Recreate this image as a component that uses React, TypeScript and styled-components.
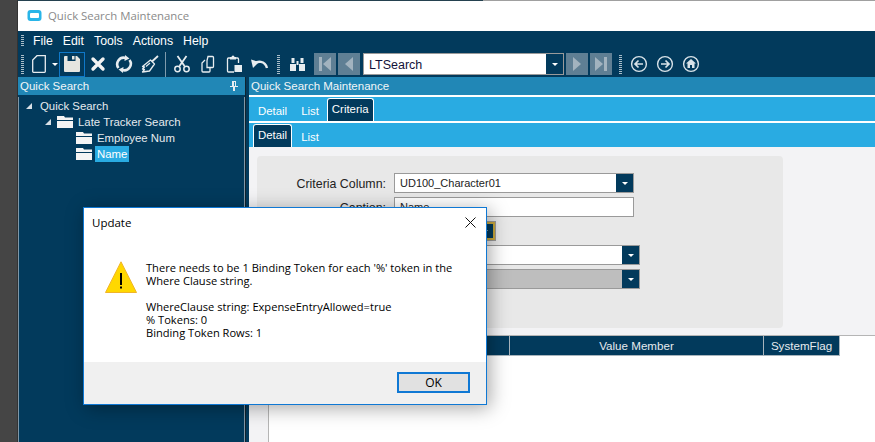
import * as React from "react";
import styled, { createGlobalStyle } from "styled-components";

const NAVY = "#023a5c";
const SKY = "#29abe2";
const HEADER = "#2187b6";
const ICON = "#e8edf0";
const DISC = "#d8e2e8";

const GlobalStyle = createGlobalStyle`
    html, body {
        margin: 0;
        padding: 0;
        width: 875px;
        height: 442px;
        overflow: hidden;
        background: #454545;
        font-family: "Liberation Sans", Arial, sans-serif;
    }
`;

const Page = styled.div`
    position: relative;
    width: 875px;
    height: 442px;
    padding-left: 18px;
    box-sizing: border-box;
    overflow: hidden;
    background: linear-gradient(to right, #454545 17px, #333 17px);
`;

const TopEdge = styled.div`
    height: 1px;
    background: linear-gradient(to right, #24414f 465px, #a0a0a0 465px);
`;

const AppWindow = styled.div`
    display: flex;
    flex-direction: column;
    width: 857px;
    height: 441px;
    background: #fff;
`;

const TitleBar = styled.div`
    display: flex;
    align-items: center;
    gap: 6px;
    height: 30px;
    flex: none;
    box-sizing: border-box;
    padding: 0 0 2px 9px;
    color: #8a8a8a;
    font: 11.4px "Open Sans", sans-serif;
`;

const Shell = styled.div`
    flex: none;
    height: 46px;
    background: ${NAVY};
    color: #fff;
`;

const MenuBar = styled.div`
    display: flex;
    align-items: center;
    height: 20px;
    padding: 0 0 0 3px;
    font-size: 12.3px;
    gap: 10px;
    span:first-of-type { margin-left: -1px; }
`;

const Grip = styled.i<{ $h?: number; $after?: number }>`
    display: block;
    flex: none;
    width: 3px;
    height: ${p => p.$h || 19}px;
    margin-right: ${p => p.$after || 0}px;
    background: repeating-linear-gradient(to bottom, #a9bdc9 0 1px, transparent 1px 2px);
`;

const ToolBar = styled.div`
    display: flex;
    align-items: center;
    height: 26px;
    padding-left: 3px;
`;

const ToolButton = styled.div<{ $w?: number; $active?: boolean; $after?: number }>`
    display: flex;
    align-items: center;
    justify-content: center;
    flex: none;
    width: ${p => p.$w || 26}px;
    height: 25px;
    margin-right: ${p => p.$after || 0}px;
    box-sizing: border-box;
    border: 1px solid ${p => (p.$active ? "#0f78c8" : "transparent")};
`;

const DropArrow = styled.svg`
    flex: none;
    margin-right: 1px;
`;

const Separator = styled.i`
    display: block;
    flex: none;
    width: 1px;
    height: 25px;
    margin: 0 3px 0 2px;
    background: #7f9bad;
`;

const NavButton = styled.div<{ $after?: number }>`
    display: flex;
    align-items: center;
    justify-content: center;
    flex: none;
    width: 22px;
    height: 22px;
    margin-right: ${p => p.$after ?? 2}px;
    background: #5f7f94;
`;

const NavCombo = styled.div`
    display: flex;
    flex: none;
    align-items: stretch;
    justify-content: space-between;
    width: 201px;
    height: 22px;
    margin-right: 2px;
    box-sizing: border-box;
    border: 1px solid #9a9a9a;
    background: #fff;
    color: #12123a;
    font-size: 12.5px;
    line-height: 22px;
    padding-left: 5px;
`;

const CaretBox = styled.div`
    display: flex;
    align-items: center;
    justify-content: center;
    flex: none;
    width: 17px;
    background: ${NAVY};
    &::after {
        content: "";
        border-left: 3px solid transparent;
        border-right: 3px solid transparent;
        border-top: 3px solid #fff;
    }
`;

const Body = styled.div`
    flex: 1;
    min-height: 0;
    display: flex;
    background: ${NAVY};
`;

const LeftDock = styled.div`
    display: flex;
    flex-direction: column;
    flex: none;
    width: 228px;
    box-sizing: border-box;
    border-right: 1px solid #10232f;
`;

const RightDock = styled.div`
    display: flex;
    flex-direction: column;
    flex: 1;
    min-width: 0;
    margin-left: 3px;
    background: #fff;
`;

const DockHeader = styled.div`
    display: flex;
    align-items: center;
    justify-content: space-between;
    height: 18px;
    flex: none;
    padding: 0 7px 0 2px;
    margin-bottom: 2px;
    background: ${HEADER};
    color: #f2f6f8;
    font-size: 11.5px;
`;

const Tree = styled.div`
    flex: 1;
    box-sizing: border-box;
    padding: 1px 0 0 4px;
    border-left: 1px solid #7f97a7;
    border-right: 1px solid #7f97a7;
    color: #e6ebef;
    font-size: 11.4px;
`;

const TreeRow = styled.div<{ $indent: number }>`
    display: flex;
    align-items: center;
    height: 16px;
    padding-left: ${p => p.$indent}px;
`;

const Twisty = styled.i`
    display: block;
    width: 0;
    height: 0;
    flex: none;
    margin-right: 6px;
    border-left: 6px solid transparent;
    border-bottom: 6px solid #d8e0e6;
`;

const TreeLabel = styled.span<{ $gap?: number; $selected?: boolean }>`
    margin-left: ${p => p.$gap || 0}px;
    padding: 0 2px;
    line-height: 16px;
    background: ${p => (p.$selected ? SKY : "transparent")};
    color: ${p => (p.$selected ? "#fff" : "inherit")};
`;

const FolderShape = styled.svg`
    flex: none;
`;

const TabRow = styled.div<{ $pad: number; $gap: number }>`
    display: flex;
    align-items: flex-end;
    flex: none;
    height: 24px;
    margin-bottom: 2px;
    padding-left: ${p => p.$pad}px;
    background: ${SKY};
    gap: ${p => p.$gap}px;
`;

const Tab = styled.div<{ $active?: boolean }>`
    box-sizing: border-box;
    height: ${p => (p.$active ? 23 : 22)}px;
    padding: 0 ${p => (p.$active ? 4 : 6)}px;
    color: #fff;
    font-size: 11.4px;
    line-height: ${p => (p.$active ? 21 : 24)}px;
    background: ${p => (p.$active ? NAVY : "transparent")};
    border: ${p => (p.$active ? "1px solid #fff" : "none")};
    border-bottom: none;
    border-radius: 3px 3px 0 0;
`;

const DetailArea = styled.div`
    flex: none;
    height: 189px;
    box-sizing: border-box;
    padding: 9px 0 0 8px;
    margin-top: -2px;
    background: #f3f3f5;
    border-bottom: 1px solid #b5b5b5;
`;

const FormPanel = styled.div`
    box-sizing: border-box;
    width: 526px;
    height: 172px;
    padding-top: 17px;
    background: #e8e8e8;
    border-radius: 4px;
    display: flex;
    flex-direction: column;
    gap: 4px;
`;

const FormRow = styled.div`
    display: flex;
    align-items: center;
    height: 20px;
`;

const FormLabel = styled.label`
    flex: none;
    width: 129px;
    margin: 2px 8px 0 0;
    text-align: right;
    color: #222;
    font-size: 12.4px;
`;

const Field = styled.div<{ $w: number; $bg?: string; $focus?: boolean }>`
    display: flex;
    justify-content: space-between;
    box-sizing: border-box;
    width: ${p => (p.$focus ? p.$w - 2 : p.$w)}px;
    height: ${p => (p.$focus ? 18 : 20)}px;
    margin-left: ${p => (p.$focus ? 1 : 0)}px;
    border: ${p => (p.$focus ? "2px solid #c9a83c" : "1px solid #9a9a9a")};
    box-shadow: ${p => (p.$focus ? "0 0 0 1px #9a9a9a" : "none")};
    background: ${p => p.$bg || "#fff"};
    padding-left: 5px;
    color: #222;
    font-size: 11px;
    line-height: 18px;
`;

const GridArea = styled.div`
    flex: 1;
    padding-left: 19px;
    background: #f3f3f5;
`;

const Grid = styled.div`
    height: 100%;
    background: #fff;
    border-left: 1px solid #b5b5b5;
`;

const GridHead = styled.div`
    display: flex;
    height: 20px;
`;

const GridCol = styled.div<{ $w: number }>`
    flex: none;
    box-sizing: border-box;
    width: ${p => p.$w}px;
    height: 20px;
    background: ${NAVY};
    border-right: 1px solid #a8b4bc;
    border-bottom: 1px solid #a8b4bc;
    color: #e6ebef;
    font-size: 11.6px;
    line-height: 20px;
    text-align: center;
`;

const Dialog = styled.div`
    position: absolute;
    left: 83px;
    top: 207px;
    width: 404px;
    height: 198px;
    box-sizing: border-box;
    display: flex;
    flex-direction: column;
    background: #fff;
    border: 1px solid #0f78d4;
    box-shadow: 3px 3px 18px rgba(0, 0, 0, 0.35);
    color: #000;
    font: 12px "Open Sans", "Noto Sans", sans-serif;
`;

const DialogTitle = styled.div`
    display: flex;
    align-items: center;
    justify-content: space-between;
    flex: none;
    height: 29px;
    padding: 0 10px 0 8px;
    font-size: 11.5px;
`;

const DialogBody = styled.div`
    flex: 1;
    display: flex;
    padding: 24px 0 0 21px;
    gap: 9px;
`;

const WarningShape = styled.svg`
    flex: none;
`;

const Message = styled.div`
    font-size: 11.1px;
    line-height: 13px;
    p { margin: 0 0 13px; }
`;

const DialogFooter = styled.div`
    display: flex;
    justify-content: flex-end;
    flex: none;
    height: 42px;
    padding: 10px 16px 0 0;
    box-sizing: border-box;
    background: #f0f0f0;
`;

const OkButton = styled.div`
    box-sizing: border-box;
    width: 73px;
    height: 21px;
    border: 2px solid #0f78d4;
    background: #e1e1e1;
    text-align: center;
    font-size: 12px;
    line-height: 17px;
`;

const Ico = ({ children, w = 18, h = 18 }: { children: React.ReactNode; w?: number; h?: number }) => (
    <svg width={w} height={h} viewBox={`0 0 ${w} ${h}`} fill="none">{children}</svg>
);

const FolderIcon = () => (
    <FolderShape width="16" height="12" viewBox="0 0 16 12">
        <path d="M0 0h7l1 1.5h8V4H0zM0 5h16v7H0z" fill="#f4f4f4" />
    </FolderShape>
);

const PinIcon = () => (
    <svg width="8" height="10" viewBox="0 0 8 10">
        <path d="M2 0h4v5h2v1H5v4H3V6H0V5h2z" fill="#e8eef2" />
        <path d="M4 1h1v4H4z" fill={HEADER} />
    </svg>
);

const WarningIcon = () => (
    <WarningShape width="32" height="32" viewBox="0 0 32 32">
        <path d="M16 .8 31.5 31.5H.5z" fill="#ffd800" stroke="#f0b429" strokeWidth="1" />
        <path d="M15 12h2v12h-2zM15 25.5h2v2h-2z" fill="#000" />
    </WarningShape>
);

const CircleGlyph = ({ children }: { children: React.ReactNode }) => (
    <ToolButton>
        <Ico>
            <circle cx="9" cy="9" r="7.4" stroke={DISC} strokeWidth="1.4" />
            {children}
        </Ico>
    </ToolButton>
);

export default function App() {
    return (
        <Page>
            <GlobalStyle />
            <TopEdge />
            <AppWindow>
                <TitleBar>
                    <svg width="15" height="11" viewBox="0 0 15 11">
                        <rect x="0.5" y="0" width="14" height="11" rx="3" fill="#29b5e8" />
                        <rect x="3" y="3" width="9" height="5" rx="1" fill="#fff" />
                    </svg>
                    Quick Search Maintenance
                </TitleBar>
                <Shell>
                    <MenuBar>
                        <Grip $h={12} />
                        <span>File</span>
                        <span>Edit</span>
                        <span>Tools</span>
                        <span>Actions</span>
                        <span>Help</span>
                    </MenuBar>
                    <ToolBar>
                        <Grip />
                        <ToolButton $w={28}>
                            <Ico w={16} h={18}>
                                <path d="M7 .7h8.3v15.8a.8.8 0 0 1-.8.8H3.5a.8.8 0 0 1-.8-.8V5z" stroke={ICON} strokeWidth="1.3" />
                            </Ico>
                        </ToolButton>
                        <DropArrow width="6" height="3" viewBox="0 0 6 3"><path d="M0 0h6L3 3z" fill="#fff" /></DropArrow>
                        <ToolButton $active>
                            <Ico>
                                <path d="M2 1h2.5v5h8V1H14l3 3v12a1 1 0 0 1-1 1H2a1 1 0 0 1-1-1V2a1 1 0 0 1 1-1z" fill="#e6e6e0" />
                                <path d="M9 1h2.5v3.5H9z" fill="#e6e6e0" />
                            </Ico>
                        </ToolButton>
                        <ToolButton>
                            <Ico w={16} h={16}>
                                <path d="M3 3l10 10M13 3 3 13" stroke="#f2f2f2" strokeWidth="3.4" strokeLinecap="round" />
                            </Ico>
                        </ToolButton>
                        <ToolButton>
                            <Ico>
                                <path d="M3.5 13A6.5 6.5 0 0 1 10.5 2.9M14.5 5A6.5 6.5 0 0 1 7.5 15.1" stroke={ICON} strokeWidth="2.6" />
                                <path d="M10 0l4.5 3.5L9.5 6zM8 18l-4.500-3.500L8.500 12z" fill={ICON} />
                            </Ico>
                        </ToolButton>
                        <ToolButton>
                            <Ico>
                                <path d="M17 1l-6 5.5" stroke={ICON} strokeWidth="1.8" />
                                <path d="M9.500 5 13.500 9 8.500 16 1.500 17 3.500 14.500 1.500 14 3.500 12 1.500 11.500z" stroke={ICON} strokeWidth="1.3" strokeLinejoin="round" />
                                <path d="M5 11.5 9 8" stroke={ICON} strokeWidth="1.1" />
                            </Ico>
                        </ToolButton>
                        <Separator />
                        <ToolButton>
                            <Ico>
                                <path d="M4.500 1l7 10M13.500 1l-7 10" stroke={ICON} strokeWidth="1.8" />
                                <circle cx="4.5" cy="14" r="2.7" stroke={ICON} strokeWidth="1.5" />
                                <circle cx="13.5" cy="14" r="2.7" stroke={ICON} strokeWidth="1.5" />
                            </Ico>
                        </ToolButton>
                        <ToolButton>
                            <Ico w={16} h={18}>
                                <path d="M8 1.5h4.500a1 1 0 0 1 1 1v9a1 1 0 0 1-1 1H7V5.500z" stroke={ICON} strokeWidth="1.3" />
                                <path d="M5 5 2 8v8a1 1 0 0 0 1 1h6a1 1 0 0 0 1-1v-3" stroke={ICON} strokeWidth="1.3" />
                            </Ico>
                        </ToolButton>
                        <ToolButton>
                            <Ico w={16} h={18}>
                                <path d="M4 3H2.500a1 1 0 0 0-1 1v12a1 1 0 0 0 1 1H8M10 3h1.500a1 1 0 0 1 1 1v4" stroke={ICON} strokeWidth="1.3" />
                                <path d="M4 2h1.500a1.500 1.500 0 0 1 3 0H10v2.500H4zM8.500 10H16v7H8.500z" fill={ICON} />
                            </Ico>
                        </ToolButton>
                        <ToolButton $after={4}>
                            <Ico w={18} h={14}>
                                <path d="M3 7.500C6 3.500 14 3.500 16 11" stroke={ICON} strokeWidth="2.4" />
                                <path d="M0 2.500 8 5 2 11z" fill={ICON} />
                            </Ico>
                        </ToolButton>
                        <Grip />
                        <ToolButton $w={34}>
                            <Ico w={17} h={15}>
                                <path d="M1 7h6v7H1zM10 7h6v7h-6zM2.500 1h3v5h-3zM11.500 1h3v5h-3zM7.500 4h2v4h-2z" fill={ICON} />
                            </Ico>
                        </ToolButton>
                        <NavButton>
                            <svg width="14" height="14" viewBox="0 0 14 14"><path d="M1 0h3v14H1zM13 0v14L5 7z" fill="#a2b3bf" /></svg>
                        </NavButton>
                        <NavButton $after={3}>
                            <svg width="10" height="14" viewBox="0 0 10 14"><path d="M9 0v14L1 7z" fill="#a2b3bf" /></svg>
                        </NavButton>
                        <NavCombo>
                            LTSearch
                            <CaretBox />
                        </NavCombo>
                        <NavButton>
                            <svg width="10" height="14" viewBox="0 0 10 14"><path d="M1 0v14l8-7z" fill="#a2b3bf" /></svg>
                        </NavButton>
                        <NavButton $after={7}>
                            <svg width="14" height="14" viewBox="0 0 14 14"><path d="M13 0h-3v14h3zM1 0v14l8-7z" fill="#a2b3bf" /></svg>
                        </NavButton>
                        <Grip $after={4} />
                        <CircleGlyph><path d="M13 9H5.500M8.500 5.500 5 9l3.500 3.500" stroke={DISC} strokeWidth="1.7" /></CircleGlyph>
                        <CircleGlyph><path d="M5 9h7.500M9.500 5.500 13 9l-3.500 3.500" stroke={DISC} strokeWidth="1.7" /></CircleGlyph>
                        <CircleGlyph><path d="M9 4l-5 4.500h1.500V13h2.500v-3h2v3h2.500V8.500H14z" fill={DISC} /></CircleGlyph>
                    </ToolBar>
                </Shell>
                <Body>
                    <LeftDock>
                        <DockHeader>Quick Search <PinIcon /></DockHeader>
                        <Tree>
                            <TreeRow $indent={3}><Twisty /><TreeLabel>Quick Search</TreeLabel></TreeRow>
                            <TreeRow $indent={22}><Twisty /><FolderIcon /><TreeLabel $gap={3}>Late Tracker Search</TreeLabel></TreeRow>
                            <TreeRow $indent={53}><FolderIcon /><TreeLabel $gap={3}>Employee Num</TreeLabel></TreeRow>
                            <TreeRow $indent={53}><FolderIcon /><TreeLabel $gap={3} $selected>Name</TreeLabel></TreeRow>
                        </Tree>
                    </LeftDock>
                    <RightDock>
                        <DockHeader>Quick Search Maintenance</DockHeader>
                        <TabRow $pad={3} $gap={2}>
                            <Tab>Detail</Tab>
                            <Tab>List</Tab>
                            <Tab $active>Criteria</Tab>
                        </TabRow>
                        <TabRow $pad={4} $gap={3}>
                            <Tab $active>Detail</Tab>
                            <Tab>List</Tab>
                        </TabRow>
                        <DetailArea>
                            <FormPanel>
                                <FormRow>
                                    <FormLabel>Criteria Column:</FormLabel>
                                    <Field $w={240}>UD100_Character01<CaretBox /></Field>
                                </FormRow>
                                <FormRow>
                                    <FormLabel>Caption:</FormLabel>
                                    <Field $w={240}>Name</Field>
                                </FormRow>
                                <FormRow>
                                    <FormLabel />
                                    <Field $w={102} $focus><span /><CaretBox /></Field>
                                </FormRow>
                                <FormRow>
                                    <FormLabel />
                                    <Field $w={246}><span /><CaretBox /></Field>
                                </FormRow>
                                <FormRow>
                                    <FormLabel />
                                    <Field $w={246} $bg="#bebebe"><span /><CaretBox /></Field>
                                </FormRow>
                            </FormPanel>
                        </DetailArea>
                        <GridArea>
                            <Grid>
                                <GridHead>
                                    <GridCol $w={241} />
                                    <GridCol $w={254}>Value Member</GridCol>
                                    <GridCol $w={76}>SystemFlag</GridCol>
                                </GridHead>
                            </Grid>
                        </GridArea>
                    </RightDock>
                </Body>
            </AppWindow>
            <Dialog>
                <DialogTitle>
                    Update
                    <svg width="11" height="11" viewBox="0 0 11 11"><path d="M.5.5l10 10M10.5.5l-10 10" stroke="#111" strokeWidth="1" /></svg>
                </DialogTitle>
                <DialogBody>
                    <WarningIcon />
                    <Message>
                        <p>There needs to be 1 Binding Token for each '%' token in the<br />Where Clause string.</p>
                        WhereClause string: ExpenseEntryAllowed=true<br />
                        % Tokens: 0<br />
                        Binding Token Rows: 1
                    </Message>
                </DialogBody>
                <DialogFooter><OkButton>OK</OkButton></DialogFooter>
            </Dialog>
        </Page>
    );
}
